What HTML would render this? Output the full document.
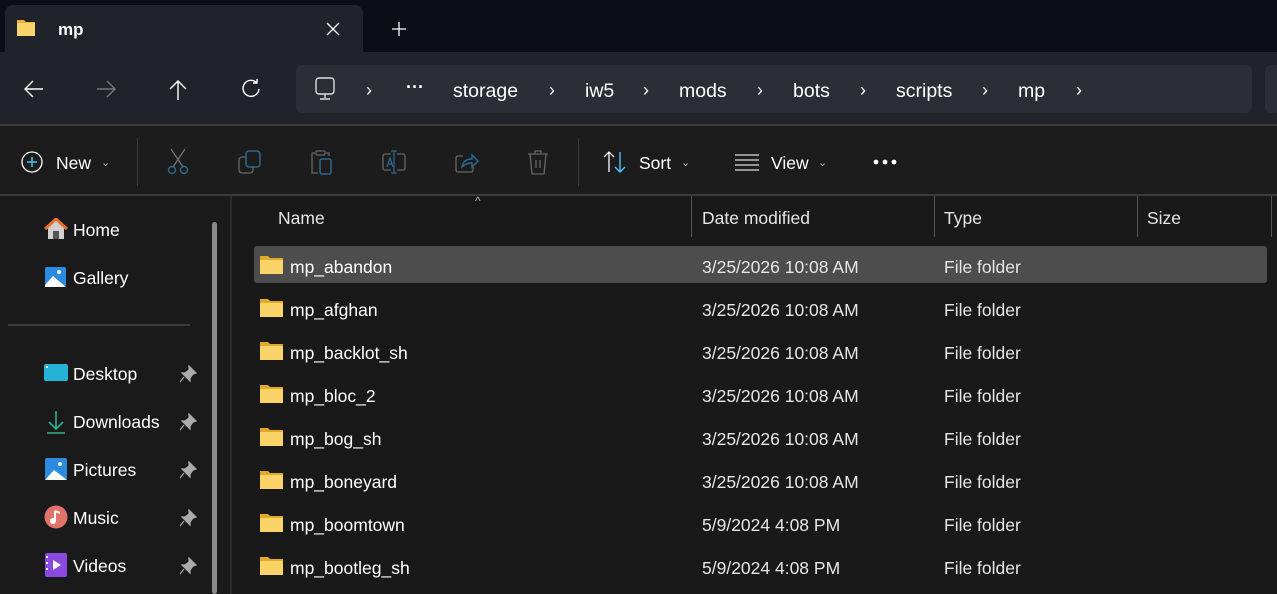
<!DOCTYPE html>
<html><head><meta charset="utf-8"><style>
*{margin:0;padding:0;box-sizing:border-box}
body{width:1277px;height:594px;overflow:hidden;background:#191919;font-family:"Liberation Sans",sans-serif;color:#fff;position:relative}
.a{position:absolute}
.t{position:absolute;white-space:nowrap;font-size:18px;line-height:20px}
.dim{color:#e6e6e6}
</style></head><body>
<!-- title bar -->
<div class="a" style="left:0;top:0;width:1277px;height:52px;background:#0b0e15"></div>
<div class="a" style="left:5px;top:5px;width:358px;height:50px;background:#202329;border-radius:8px 8px 0 0"></div>
<svg class="a" style="left:17px;top:19px" width="18" height="17" viewBox="0 0 18 17"><path d="M0 1h7l2 2h9v14H0z" fill="#e8b63a"/><rect x="0" y="4" width="18" height="13" fill="#f9d46a"/></svg>
<div class="t" style="left:58px;top:20px;font-size:17px;font-weight:bold">mp</div>
<svg class="a" style="left:325px;top:21px" width="16" height="16"><path d="M2 2L14 14M14 2L2 14" stroke="#fff" stroke-width="1.3"/></svg>
<svg class="a" style="left:391px;top:21px" width="16" height="16"><path d="M8 1v14M1 8h14" stroke="#fff" stroke-width="1.3"/></svg>
<!-- nav bar -->
<div class="a" style="left:0;top:52px;width:1277px;height:72px;background:#202329"></div>
<svg class="a" style="left:22px;top:78px" width="24" height="22"><path d="M21 11H3M11 3L3 11L11 19" stroke="#fff" stroke-width="1.4" fill="none"/></svg>
<svg class="a" style="left:94px;top:78px" width="24" height="22"><path d="M3 11H21M13 3L21 11L13 19" stroke="#777" stroke-width="1.4" fill="none"/></svg>
<svg class="a" style="left:167px;top:78px" width="22" height="24"><path d="M11 22V3M3 11L11 3L19 11" stroke="#fff" stroke-width="1.4" fill="none"/></svg>
<svg class="a" style="left:240px;top:78px" width="22" height="22"><path d="M17 5A8 8 0 1 0 19 11M17 1V5H13" stroke="#fff" stroke-width="1.4" fill="none"/></svg>
<div class="a" style="left:296px;top:65px;width:956px;height:48px;background:#2b2e35;border-radius:6px"></div>
<div class="a" style="left:1265px;top:65px;width:30px;height:48px;background:#2b2e35;border-radius:6px"></div>
<svg class="a" style="left:314px;top:77px" width="24" height="24"><rect x="2" y="1" width="18" height="16" rx="3" stroke="#ddd" stroke-width="1.4" fill="none"/><path d="M11 17v4M6 22h10" stroke="#ddd" stroke-width="1.4"/></svg>
<div class="t" style="left:366px;top:80px">›</div>
<div class="t" style="left:406px;top:77px;font-weight:bold">···</div>
<div class="t" style="left:453px;top:81px;font-size:19.5px">storage</div>
<div class="t" style="left:549px;top:80px">›</div>
<div class="t" style="left:585px;top:81px;font-size:19.5px">iw5</div>
<div class="t" style="left:643px;top:80px">›</div>
<div class="t" style="left:679px;top:81px;font-size:19.5px">mods</div>
<div class="t" style="left:757px;top:80px">›</div>
<div class="t" style="left:793px;top:81px;font-size:19.5px">bots</div>
<div class="t" style="left:860px;top:80px">›</div>
<div class="t" style="left:896px;top:81px;font-size:19.5px">scripts</div>
<div class="t" style="left:982px;top:80px">›</div>
<div class="t" style="left:1018px;top:81px;font-size:19.5px">mp</div>
<div class="t" style="left:1076px;top:80px">›</div>
<!-- toolbar -->
<div class="a" style="left:0;top:124px;width:1277px;height:2px;background:#3c3c3c"></div>
<div class="a" style="left:0;top:126px;width:1277px;height:68px;background:#1c1c1c"></div>
<div class="a" style="left:0;top:194px;width:1277px;height:2px;background:#3a3a3a"></div>
<svg class="a" style="left:20px;top:150px" width="24" height="24"><circle cx="12" cy="12" r="10" stroke="#fff" stroke-width="1.3" fill="none"/><path d="M12 7v10M7 12h10" stroke="#4cc2ff" stroke-width="1.4"/></svg>
<div class="t" style="left:56px;top:153px;font-size:17.5px">New</div>
<div class="t" style="left:101px;top:153px;font-size:11px;color:#bbb">⌄</div>
<div class="a" style="left:137px;top:138px;width:1px;height:48px;background:#3a3a3a"></div>
<svg class="a" style="left:166px;top:148px" width="24" height="28"><path d="M5 1L17 19M19 1L7 19" stroke="#777" stroke-width="1.2"/><circle cx="6" cy="22" r="3.5" stroke="#2b6a8e" stroke-width="1.4" fill="none"/><circle cx="18" cy="22" r="3.5" stroke="#2b6a8e" stroke-width="1.4" fill="none"/></svg>
<svg class="a" style="left:238px;top:150px" width="26" height="26"><rect x="1" y="7" width="14" height="16" rx="3" stroke="#666" stroke-width="1.3" fill="none"/><rect x="8" y="1" width="14" height="16" rx="3" stroke="#2b6a8e" stroke-width="1.5" fill="#1c1c1c"/></svg>
<svg class="a" style="left:310px;top:149px" width="26" height="28"><path d="M5 4H2v20h6M16 4h3v3" stroke="#666" stroke-width="1.3" fill="none"/><rect x="6" y="2" width="9" height="4" rx="1" stroke="#666" stroke-width="1.2" fill="none"/><rect x="10" y="10" width="11" height="15" rx="2" stroke="#2b6a8e" stroke-width="1.5" fill="none"/></svg>
<svg class="a" style="left:381px;top:149px" width="26" height="28"><path d="M10 5H4a2 2 0 0 0-2 2v12a2 2 0 0 0 2 2h6M16 5h6a2 2 0 0 1 2 2v12a2 2 0 0 1-2 2h-6" stroke="#666" stroke-width="1.3" fill="none"/><path d="M13 2v22M10 2h6M10 24h6M6 18l3-9 3 9M7 15h4" stroke="#2b6a8e" stroke-width="1.3" fill="none"/></svg>
<svg class="a" style="left:454px;top:150px" width="26" height="26"><path d="M9 6H4a2 2 0 0 0-2 2v12a2 2 0 0 0 2 2h13a2 2 0 0 0 2-2v-3" stroke="#666" stroke-width="1.3" fill="none"/><path d="M8 17c1-6 5-8 10-8V5l6 6-6 6v-4c-4 0-7 1-10 4z" stroke="#2b6a8e" stroke-width="1.4" fill="none"/></svg>
<svg class="a" style="left:526px;top:149px" width="24" height="28"><path d="M2 5h20M9 5V2h6v3M4 5l2 20h12l2-20M10 11v8M14 11v8" stroke="#666" stroke-width="1.3" fill="none"/></svg>
<div class="a" style="left:578px;top:138px;width:1px;height:48px;background:#3a3a3a"></div>
<svg class="a" style="left:602px;top:150px" width="26" height="24"><path d="M7 22V2M2 7l5-5 5 5" stroke="#fff" stroke-width="1.3" fill="none"/><path d="M18 2v20M13 17l5 5 5-5" stroke="#4cc2ff" stroke-width="1.4" fill="none"/></svg>
<div class="t" style="left:639px;top:153px;font-size:17.5px">Sort</div>
<div class="t" style="left:681px;top:153px;font-size:11px;color:#bbb">⌄</div>
<svg class="a" style="left:734px;top:152px" width="26" height="20"><path d="M1 3h24M1 8h24M1 13h24M1 18h24" stroke="#ddd" stroke-width="1.3"/></svg>
<div class="t" style="left:771px;top:153px;font-size:17.5px">View</div>
<div class="t" style="left:818px;top:153px;font-size:11px;color:#bbb">⌄</div>
<svg class="a" style="left:872px;top:158px" width="26" height="8"><circle cx="4" cy="4" r="2.4" fill="#fff"/><circle cx="13" cy="4" r="2.4" fill="#fff"/><circle cx="22" cy="4" r="2.4" fill="#fff"/></svg>
<!-- sidebar -->
<div class="a" style="left:0;top:196px;width:230px;height:398px;background:#1a1a1a"></div>
<div class="a" style="left:230px;top:196px;width:2px;height:398px;background:#2a2a2a"></div>
<div class="a" style="left:212px;top:222px;width:5px;height:372px;background:#8a8a8a;border-radius:3px"></div>
<div class="a" style="left:8px;top:324px;width:182px;height:2px;background:#3a3a3a"></div>
<svg class="a" style="left:44px;top:218px" width="24" height="22"><path d="M12 1L1 11h3v10h16V11h3z" fill="#d0d0d0"/><path d="M1 11L12 1l11 10" stroke="#e8702a" stroke-width="3" fill="none"/><rect x="9" y="13" width="6" height="8" fill="#555"/></svg>
<div class="t" style="left:73px;top:220px;font-size:17.5px">Home</div>
<svg class="a" style="left:44px;top:265px" width="24" height="24"><rect x="1" y="2" width="21" height="20" rx="2" fill="#2a8be0"/><path d="M1 20l8-9 13 11H1z" fill="#fff"/><circle cx="15" cy="7" r="2" fill="#fff"/></svg>
<div class="t" style="left:73px;top:268px;font-size:17.5px">Gallery</div>
<svg class="a" style="left:44px;top:363px" width="24" height="20"><rect x="0" y="1" width="24" height="17" rx="2" fill="#25b2d6"/><rect x="2" y="3" width="2" height="2" fill="#fff"/></svg>
<div class="t" style="left:73px;top:364px;font-size:17.5px">Desktop</div>
<svg class="a" style="left:46px;top:410px" width="20" height="24"><path d="M10 1v18M3 12l7 7 7-7M1 23h18" stroke="#30b090" stroke-width="1.6" fill="none"/></svg>
<div class="t" style="left:73px;top:412px;font-size:17.5px">Downloads</div>
<svg class="a" style="left:45px;top:458px" width="22" height="22"><rect x="0" y="0" width="22" height="22" rx="2" fill="#2a8be0"/><path d="M0 22l9-10 13 10z" fill="#fff"/><circle cx="15" cy="6" r="2" fill="#fff"/></svg>
<div class="t" style="left:73px;top:460px;font-size:17.5px">Pictures</div>
<svg class="a" style="left:44px;top:505px" width="24" height="24"><circle cx="12" cy="12" r="11.5" fill="#e0736a"/><path d="M11 6v10" stroke="#fff" stroke-width="2"/><path d="M11 6l5 2" stroke="#fff" stroke-width="2"/><circle cx="9" cy="16" r="3" fill="#fff"/></svg>
<div class="t" style="left:73px;top:508px;font-size:17.5px">Music</div>
<svg class="a" style="left:45px;top:553px" width="22" height="24"><rect x="0" y="0" width="22" height="24" rx="2" fill="#8a4ae0"/><path d="M8 7l8 5-8 5z" fill="#fff"/><rect x="1" y="3" width="2" height="2" fill="#fff"/><rect x="1" y="9" width="2" height="2" fill="#fff"/><rect x="1" y="15" width="2" height="2" fill="#fff"/></svg>
<div class="t" style="left:73px;top:556px;font-size:17.5px">Videos</div>
<svg class="a" style="left:179px;top:365px" width="18" height="18"><path d="M10 1l7 7-3 1-3 4 0 3-8-8 3 0 4-3z M5 12l-4 5" fill="#aaa" stroke="#aaa" stroke-width="1.2"/></svg>
<svg class="a" style="left:179px;top:413px" width="18" height="18"><path d="M10 1l7 7-3 1-3 4 0 3-8-8 3 0 4-3z M5 12l-4 5" fill="#aaa" stroke="#aaa" stroke-width="1.2"/></svg>
<svg class="a" style="left:179px;top:461px" width="18" height="18"><path d="M10 1l7 7-3 1-3 4 0 3-8-8 3 0 4-3z M5 12l-4 5" fill="#aaa" stroke="#aaa" stroke-width="1.2"/></svg>
<svg class="a" style="left:179px;top:509px" width="18" height="18"><path d="M10 1l7 7-3 1-3 4 0 3-8-8 3 0 4-3z M5 12l-4 5" fill="#aaa" stroke="#aaa" stroke-width="1.2"/></svg>
<svg class="a" style="left:179px;top:557px" width="18" height="18"><path d="M10 1l7 7-3 1-3 4 0 3-8-8 3 0 4-3z M5 12l-4 5" fill="#aaa" stroke="#aaa" stroke-width="1.2"/></svg>
<!-- headers -->
<div class="t" style="left:475px;top:191px;font-size:12px;color:#bbb">^</div>
<div class="t dim" style="left:278px;top:208px;font-size:17.5px">Name</div>
<div class="a" style="left:691px;top:196px;width:1px;height:41px;background:#555"></div>
<div class="t dim" style="left:702px;top:208px;font-size:17.5px">Date modified</div>
<div class="a" style="left:934px;top:196px;width:1px;height:41px;background:#555"></div>
<div class="t dim" style="left:944px;top:208px;font-size:17.5px">Type</div>
<div class="a" style="left:1137px;top:196px;width:1px;height:41px;background:#555"></div>
<div class="t dim" style="left:1147px;top:208px;font-size:17.5px">Size</div>
<div class="a" style="left:1271px;top:196px;width:1px;height:41px;background:#555"></div>
<div class="a" style="left:254px;top:246px;width:1013px;height:37px;background:#4d4d4d;border-radius:3px"></div>
<div id="rows"></div>
<script>
var d=[["mp_abandon","3/25/2026 10:08 AM"],["mp_afghan","3/25/2026 10:08 AM"],["mp_backlot_sh","3/25/2026 10:08 AM"],["mp_bloc_2","3/25/2026 10:08 AM"],["mp_bog_sh","3/25/2026 10:08 AM"],["mp_boneyard","3/25/2026 10:08 AM"],["mp_boomtown","5/9/2024 4:08 PM"],["mp_bootleg_sh","5/9/2024 4:08 PM"]];
var h="";d.forEach(function(r,i){var y=256+i*43;
h+='<svg class="a" style="left:260px;top:'+y+'px" width="23" height="18" viewBox="0 0 23 18"><path d="M0 0h8l2 2h13v16H0z" fill="#e0a92a"/><rect x="0" y="4" width="23" height="14" rx="1" fill="#fbd469"/></svg>';
var ty=y+1;h+='<div class="t" style="left:290px;top:'+ty+'px;font-size:17.5px">'+r[0]+'</div><div class="t dim" style="left:702px;top:'+ty+'px;font-size:17.5px">'+r[1]+'</div><div class="t dim" style="left:944px;top:'+ty+'px;font-size:17.5px">File folder</div>';});
document.getElementById("rows").innerHTML=h;
</script>
</body></html>
